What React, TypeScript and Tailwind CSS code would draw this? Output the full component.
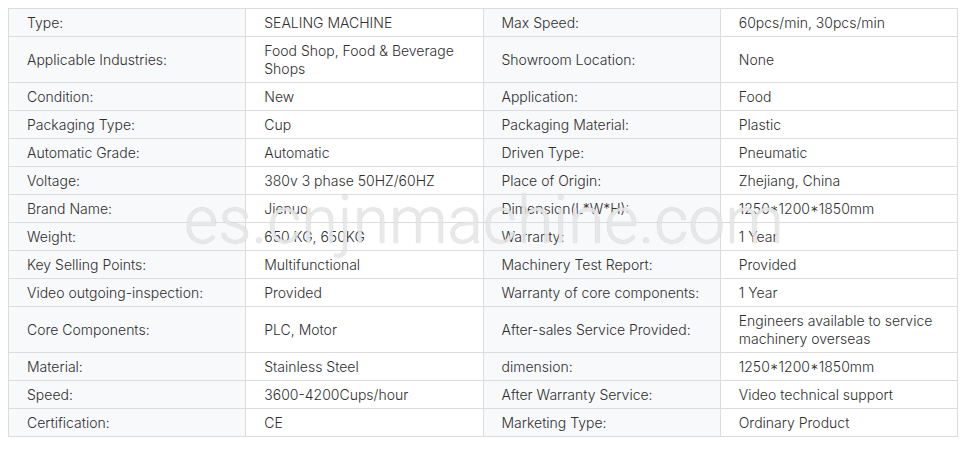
import React from "react";

const rows: [string, string, string, string][] = [
  ["Type:", "SEALING MACHINE", "Max Speed:", "60pcs/min, 30pcs/min"],
  ["Applicable Industries:", "Food Shop, Food & Beverage Shops", "Showroom Location:", "None"],
  ["Condition:", "New", "Application:", "Food"],
  ["Packaging Type:", "Cup", "Packaging Material:", "Plastic"],
  ["Automatic Grade:", "Automatic", "Driven Type:", "Pneumatic"],
  ["Voltage:", "380v 3 phase 50HZ/60HZ", "Place of Origin:", "Zhejiang, China"],
  ["Brand Name:", "Jienuo", "Dimension(L*W*H):", "1250*1200*1850mm"],
  ["Weight:", "650 KG, 650KG", "Warranty:", "1 Year"],
  ["Key Selling Points:", "Multifunctional", "Machinery Test Report:", "Provided"],
  ["Video outgoing-inspection:", "Provided", "Warranty of core components:", "1 Year"],
  ["Core Components:", "PLC, Motor", "After-sales Service Provided:", "Engineers available to service machinery overseas"],
  ["Material:", "Stainless Steel", "dimension:", "1250*1200*1850mm"],
  ["Speed:", "3600-4200Cups/hour", "After Warranty Service:", "Video technical support"],
  ["Certification:", "CE", "Marketing Type:", "Ordinary Product"],
];

export default function App() {
  return (
    <div className="w-[973px] h-[450px] bg-white pt-[8px] pl-[8px]">
      <div className="relative w-[950px]" style={{ fontFamily: "Inter, 'Open Sans', sans-serif" }}>
        <table className="w-[950px] table-fixed border-collapse text-[14px] leading-[18px] text-[#2f2f2f] font-light">
          <tbody>
            {rows.map((r, i) => (
              <tr key={i}>
                <td className="w-1/4 border border-[#dcdcdc] bg-[#f8f9fb] px-[18px] py-[4.5px] align-middle">{r[0]}</td>
                <td className="w-1/4 border border-[#dcdcdc] bg-white px-[18px] py-[4.5px] align-middle">{r[1]}</td>
                <td className="w-1/4 border border-[#dcdcdc] bg-[#f8f9fb] px-[18px] py-[4.5px] align-middle">{r[2]}</td>
                <td className="w-1/4 border border-[#dcdcdc] bg-white px-[18px] py-[4.5px] align-middle">{r[3]}</td>
              </tr>
            ))}
          </tbody>
        </table>
        <div
          className="pointer-events-none absolute left-[176px] top-[173px] text-[66px] leading-[80px] font-light text-[rgba(238,238,238,0.85)] [text-shadow:0_0_1px_rgba(0,0,0,0.25)]"
          style={{ fontFamily: "Roboto, sans-serif" }}
        >
          es.cnjnmachine.com
        </div>
      </div>
    </div>
  );
}
